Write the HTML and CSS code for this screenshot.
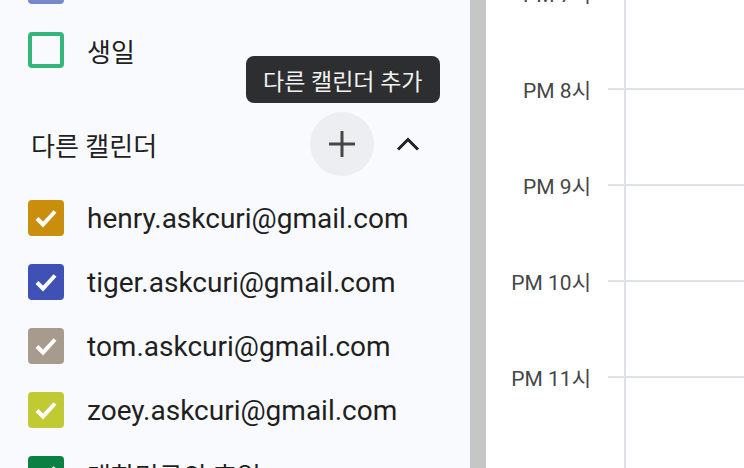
FILE: index.html
```html
<!DOCTYPE html>
<html>
<head>
    <title>캘린더</title>
    <link rel="stylesheet" href="styles.css">
</head>
<body>
    <div class="page">
        <aside class="sidebar">
            <div class="list">
                <div class="row">
                    <span class="box lavender"><svg viewBox="0 0 36 36"><polyline points="9,18.5 15,24.5 27,11.5"/></svg></span>
                    <span class="name ko">할 일</span>
                </div>
                <div class="row">
                    <span class="box empty sage"></span>
                    <span class="name ko">생일</span>
                </div>
            </div>

            <div class="section-head">
                <span class="title">다른 캘린더</span>
                <button class="add-btn" aria-label="다른 캘린더 추가">
                    <svg viewBox="0 0 28 28"><path d="M14 1v26M1 14h26"/></svg>
                </button>
                <button class="toggle-btn" aria-label="접기">
                    <svg viewBox="0 0 24 14"><path d="M2 12.5 12 2.5l10 10"/></svg>
                </button>
            </div>
            <div class="tooltip">다른 캘린더 추가</div>

            <div class="list">
                <div class="row">
                    <span class="box mango"><svg viewBox="0 0 36 36"><polyline points="9,18.5 15,24.5 27,11.5"/></svg></span>
                    <span class="name">henry.askcuri@gmail.com</span>
                </div>
                <div class="row">
                    <span class="box blueberry"><svg viewBox="0 0 36 36"><polyline points="9,18.5 15,24.5 27,11.5"/></svg></span>
                    <span class="name">tiger.askcuri@gmail.com</span>
                </div>
                <div class="row">
                    <span class="box graphite"><svg viewBox="0 0 36 36"><polyline points="9,18.5 15,24.5 27,11.5"/></svg></span>
                    <span class="name">tom.askcuri@gmail.com</span>
                </div>
                <div class="row">
                    <span class="box avocado"><svg viewBox="0 0 36 36"><polyline points="9,18.5 15,24.5 27,11.5"/></svg></span>
                    <span class="name">zoey.askcuri@gmail.com</span>
                </div>
                <div class="row">
                    <span class="box basil"><svg viewBox="0 0 36 36"><polyline points="9,18.5 15,24.5 27,11.5"/></svg></span>
                    <span class="name ko">대한민국의 휴일</span>
                </div>
            </div>
        </aside>

        <div class="scrollbar"></div>

        <main class="main">
            <div class="hours">
                <div class="hour"><span class="label">PM 7시</span><span class="cell"></span></div>
                <div class="hour"><span class="label">PM 8시</span><span class="cell"></span></div>
                <div class="hour"><span class="label">PM 9시</span><span class="cell"></span></div>
                <div class="hour"><span class="label">PM 10시</span><span class="cell"></span></div>
                <div class="hour"><span class="label">PM 11시</span><span class="cell"></span></div>
            </div>
        </main>
    </div>
</body>
</html>
```

FILE: styles.css
```css
html, body {
    margin: 0;
    height: 100%;
    overflow: hidden;
}
body {
    font-family: Roboto, "Noto Sans CJK KR", sans-serif;
    color: #1f1f1f;
}
.page {
    display: flex;
    height: 468px;
}

/* sidebar */
.sidebar {
    position: relative;
    width: 470px;
    flex: none;
    background: #f8fafd;
    overflow: hidden;
}
.list {
    display: flex;
    flex-direction: column;
}
.sidebar > .list:first-child {
    margin-top: -46px;
}
.row {
    display: flex;
    align-items: center;
    height: 64px;
    padding-left: 28px;
}
.box {
    width: 36px;
    height: 36px;
    flex: none;
    border-radius: 4px;
    box-sizing: border-box;
}
.box svg {
    display: block;
    width: 36px;
    height: 36px;
    fill: none;
    stroke: #fff;
    stroke-width: 4;
}
.box.empty {
    background: transparent;
    border: 4px solid #33b679;
}
.lavender { background: #7986cb; }
.mango { background: #c98f0c; }
.blueberry { background: #3f51b5; }
.graphite { background: #a79b8e; }
.avocado { background: #c0ca33; }
.basil { background: #0b8043; }
.name {
    margin-left: 23px;
    font-size: 28px;
    white-space: nowrap;
}
.name.ko {
    font-size: 26px;
}

.section-head {
    display: flex;
    align-items: center;
    height: 72px;
    margin: 26px 0 6px;
    padding-left: 31px;
}
.title {
    font-size: 26px;
    flex: 1;
}
.add-btn, .toggle-btn {
    border: none;
    padding: 0;
    background: none;
    display: flex;
    align-items: center;
    justify-content: center;
}
.add-btn {
    width: 64px;
    height: 64px;
    border-radius: 50%;
    background: #eceef1;
}
.add-btn svg {
    width: 28px;
    height: 28px;
    fill: none;
    stroke: #444746;
    stroke-width: 3;
}
.toggle-btn {
    width: 48px;
    height: 48px;
    margin: 0 38px 0 10px;
}
.toggle-btn svg {
    width: 24px;
    height: 14px;
    fill: none;
    stroke: #1f1f1f;
    stroke-width: 3;
}
.tooltip {
    position: absolute;
    left: 246px;
    top: 56px;
    height: 47px;
    padding: 0 17px;
    display: flex;
    align-items: center;
    border-radius: 8px;
    background: #2d2e30;
    color: #f1f1f1;
    font-size: 23px;
    white-space: nowrap;
}

.scrollbar {
    width: 16px;
    flex: none;
    background: #c6c6c6;
}

/* day view */
.main {
    flex: 1;
    background: #fff;
    overflow: hidden;
}
.hours {
    margin-top: -8px;
    background: linear-gradient(#dde1ea, #dde1ea) 138px 0 / 2px 100% no-repeat;
    height: 500px;
}
.hour {
    display: flex;
    height: 96px;
}
.label {
    width: 105px;
    padding-right: 17px;
    margin-top: -9px;
    height: 24px;
    line-height: 24px;
    text-align: right;
    font-size: 21px;
    color: #444746;
}
.cell {
    flex: 1;
    border-top: 2px solid #dde1ea;
}
```
